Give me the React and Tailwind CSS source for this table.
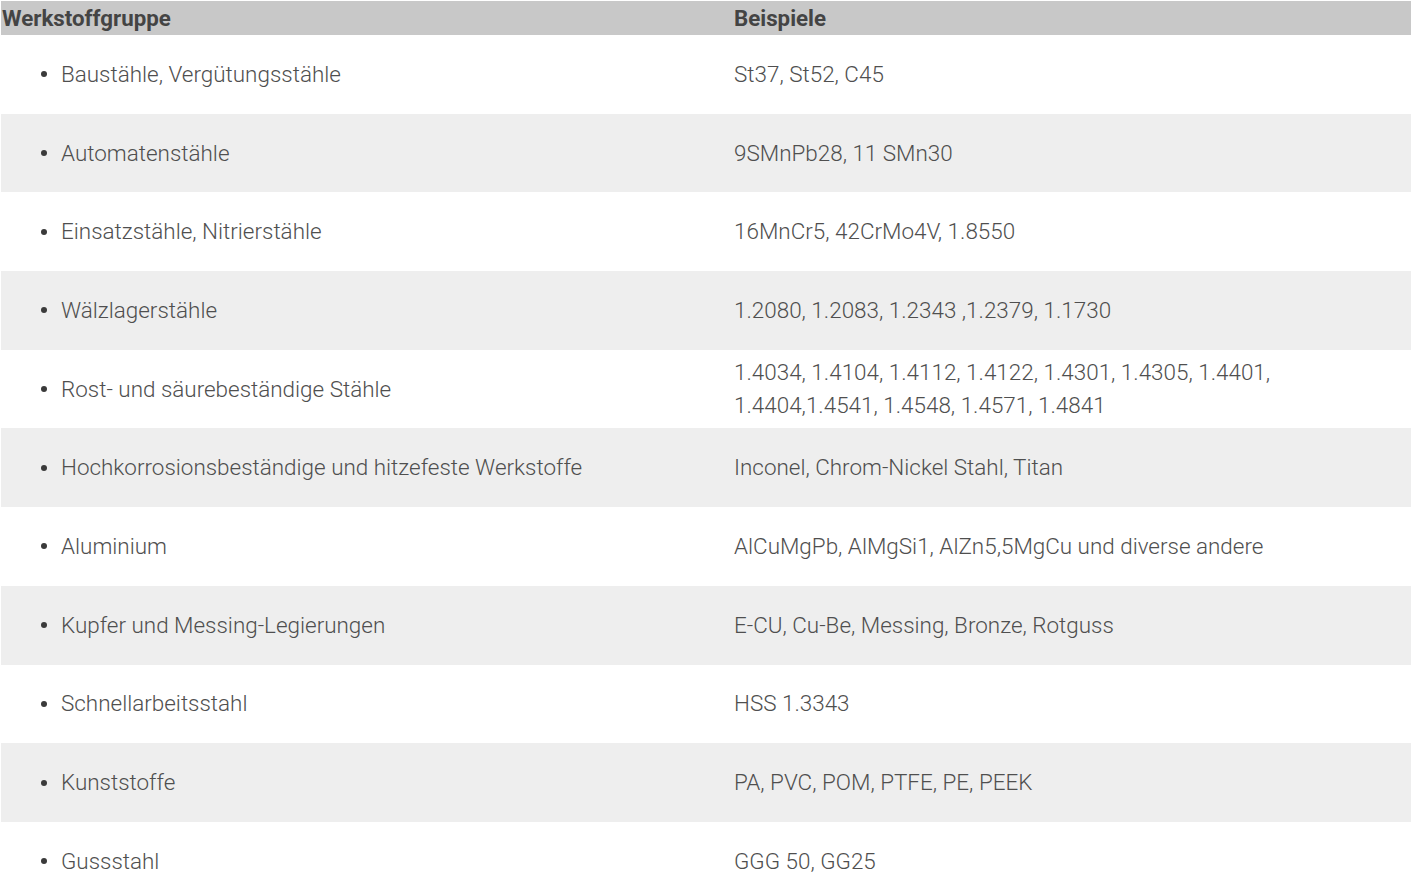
const rows = [
  ["Baustähle, Vergütungsstähle", ["St37, St52, C45"]],
  ["Automatenstähle", ["9SMnPb28, 11 SMn30"]],
  ["Einsatzstähle, Nitrierstähle", ["16MnCr5, 42CrMo4V, 1.8550"]],
  ["Wälzlagerstähle", ["1.2080, 1.2083, 1.2343 ,1.2379, 1.1730"]],
  [
    "Rost- und säurebeständige Stähle",
    ["1.4034, 1.4104, 1.4112, 1.4122, 1.4301, 1.4305, 1.4401,", "1.4404,1.4541, 1.4548, 1.4571, 1.4841"],
  ],
  ["Hochkorrosionsbeständige und hitzefeste Werkstoffe", ["Inconel, Chrom-Nickel Stahl, Titan"]],
  ["Aluminium", ["AlCuMgPb, AlMgSi1, AlZn5,5MgCu und diverse andere"]],
  ["Kupfer und Messing-Legierungen", ["E-CU, Cu-Be, Messing, Bronze, Rotguss"]],
  ["Schnellarbeitsstahl", ["HSS 1.3343"]],
  ["Kunststoffe", ["PA, PVC, POM, PTFE, PE, PEEK"]],
  ["Gussstahl", ["GGG 50, GG25"]],
];

export default function App() {
  return (
    <div className="w-[1411px] h-[879px] overflow-hidden bg-white pl-px pt-px font-['Roboto',sans-serif]">
      {/* header */}
      <div className="grid grid-cols-[733px_1fr] h-[34px] bg-[#c8c8c8] text-[#444] font-bold text-[22.3px] leading-[34px]">
        <div className="pl-px">Werkstoffgruppe</div>
        <div>Beispiele</div>
      </div>

      {rows.map(([group, examples], i) => (
        <div
          key={group}
          className={
            "grid grid-cols-[733px_1fr] h-[78.7px] items-center text-[#4f4f4f] font-light text-[22.45px] leading-[33px] " +
            (i % 2 === 1 ? "bg-[#eeeeee]" : "bg-white")
          }
        >
          <div className="flex items-center">
            <span className="ml-[40px] w-[6px] h-[6px] rounded-full bg-[#3a3a3a]"></span>
            <span className="ml-[14px]">{group}</span>
          </div>
          <div>
            {examples.map((line) => (
              <div key={line}>{line}</div>
            ))}
          </div>
        </div>
      ))}
    </div>
  );
}
